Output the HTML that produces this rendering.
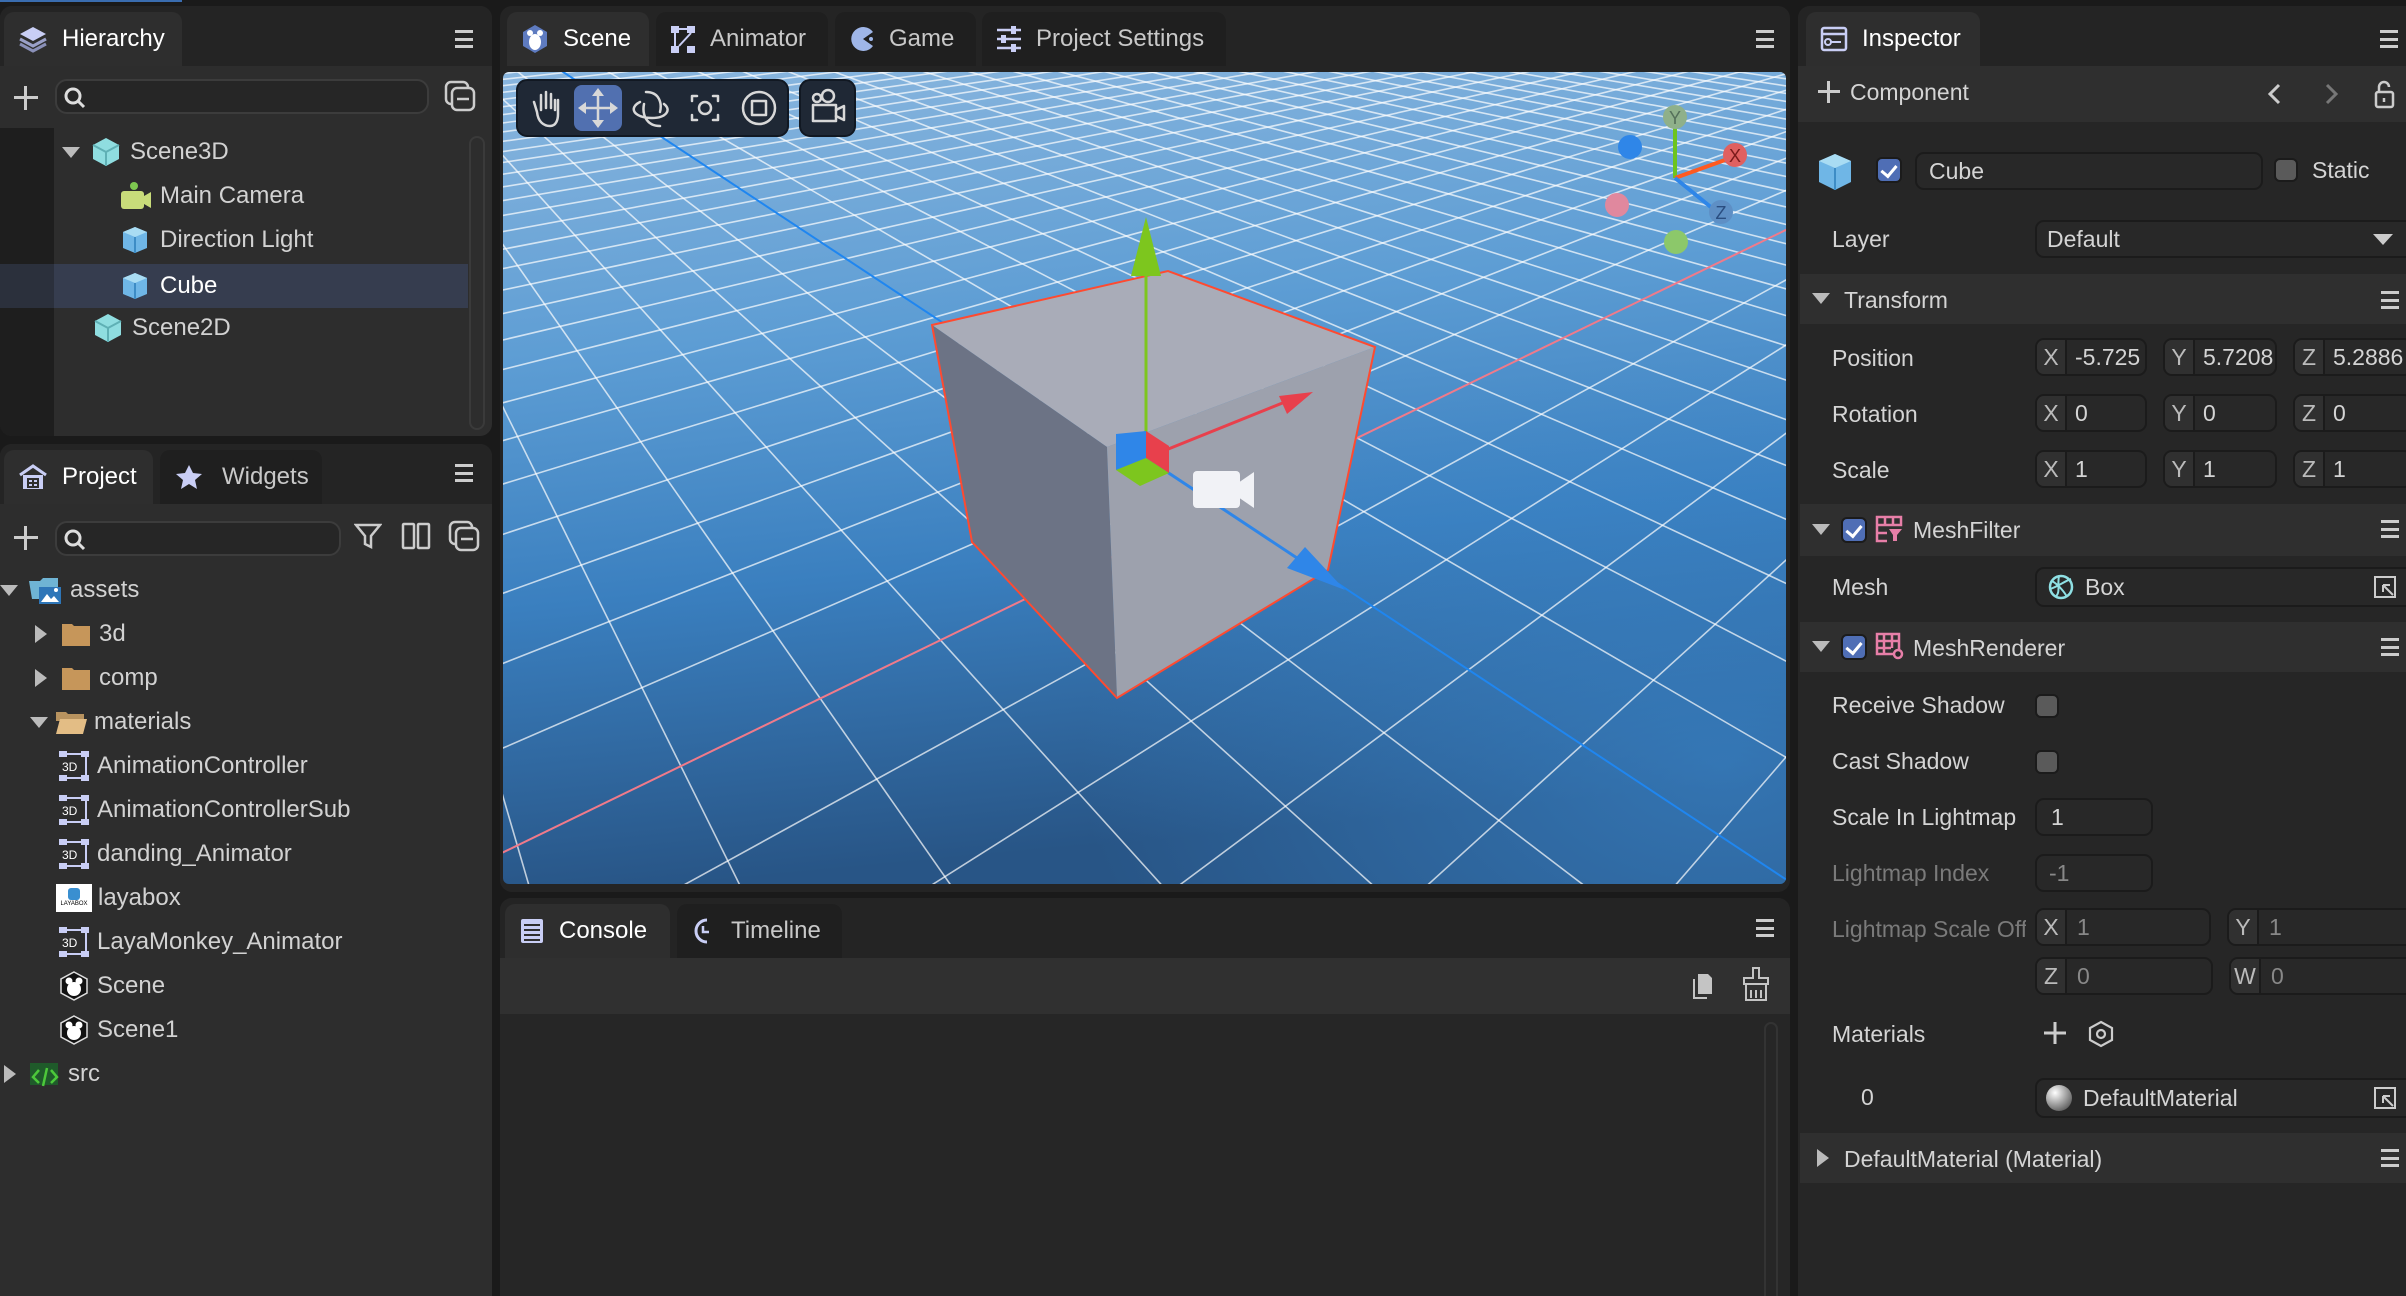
<!DOCTYPE html>
<html><head><meta charset="utf-8"><style>
*{box-sizing:border-box;margin:0;padding:0}
html,body{width:2406px;height:1296px;overflow:hidden}
body{background:#1a1a1a;font-family:"Liberation Sans",sans-serif;color:#d2d2d2;font-size:24px}
#root{position:relative;width:2406px;height:1296px;overflow:hidden}
.a{position:absolute}
.panel{position:absolute;background:#2d2d2d;border-radius:12px;overflow:hidden}
.tabbar{position:absolute;left:0;right:0;top:0;height:60px;background:#242424}
.tab{position:absolute;top:12px;height:54px;border-radius:10px 10px 0 0;background:#1f1f1f;display:flex;align-items:center;font-size:24px;color:#c8c8c8}
.tab.on{background:#2e2e2e;color:#fff}
.tab svg{margin:0 14px 0 14px}
.menu{position:absolute;width:18px;height:18px;border-top:3px solid #ccc;border-bottom:3px solid #ccc}
.menu:after{content:"";position:absolute;left:0;right:0;top:5px;border-top:3px solid #ccc}
.row{position:absolute;height:44px;display:flex;align-items:center;white-space:nowrap}
.tri{width:0;height:0;border-left:9px solid transparent;border-right:9px solid transparent;border-top:11px solid #bbb}
.trir{width:0;height:0;border-top:9px solid transparent;border-bottom:9px solid transparent;border-left:12px solid #bbb}
.search{position:absolute;border:2px solid #3c3c3c;background:#262626;border-radius:12px}
.lbl{position:absolute;font-size:23px;color:#d4d4d4;white-space:nowrap}
.fld{position:absolute;background:#282828;border:2px solid #1b1b1b;border-radius:9px;font-size:23px;color:#d4d4d4;display:flex;align-items:center;overflow:hidden;white-space:nowrap}
.fld .k{width:30px;height:100%;background:#303030;border-right:2px solid #1b1b1b;display:flex;align-items:center;justify-content:center;color:#bbb;flex:none}
.fld .v{padding-left:10px}
.hdr{position:absolute;background:#2f2f2f}
.cb{position:absolute;width:26px;height:26px;border-radius:6px;background:#4f6eb5;border:2px solid #1b1b1b}
.cb:after{content:"";position:absolute;left:6px;top:3px;width:7px;height:12px;border:solid #fff;border-width:0 3px 3px 0;transform:rotate(40deg)}
.ucb{position:absolute;width:24px;height:24px;border-radius:6px;background:#5a5a5a;border:2px solid #1b1b1b}
</style></head><body><div id="root">
<div class="a" style="left:0;top:0;width:182px;height:2px;background:#3a6db0"></div>

<!-- HIERARCHY -->
<div class="panel" style="left:0;top:6px;width:492px;height:430px;background:#2d2d2d">
 <div class="tabbar" style="height:60px"></div>
 <div class="tab on" style="left:4px;top:6px;width:178px"><svg width="30" height="30" viewBox="0 0 30 30"><path d="M15 3 L28 10 L15 17 L2 10Z" fill="#c9cef5"/><path d="M2 15 L15 22 L28 15" stroke="#9aa0c8" stroke-width="3" fill="none"/><path d="M2 20 L15 27 L28 20" stroke="#8a90b8" stroke-width="3" fill="none"/></svg>Hierarchy</div>
 <div class="menu" style="left:455px;top:24px"></div>
 <div class="a" style="left:14px;top:80px;width:24px;height:24px"><div class="a" style="left:10px;top:0;width:3px;height:24px;background:#ccc"></div><div class="a" style="left:0;top:10px;width:24px;height:3px;background:#ccc"></div></div>
 <div class="search" style="left:55px;top:73px;width:374px;height:35px"><svg class="a" style="left:6px;top:5px" width="24" height="24" viewBox="0 0 24 24"><circle cx="10" cy="10" r="7" stroke="#ddd" stroke-width="3" fill="none"/><path d="M15 15 L21 21" stroke="#ddd" stroke-width="3"/></svg></div>
 <svg class="a" style="left:444px;top:74px" width="32" height="32" viewBox="0 0 32 32"><rect x="2" y="2" width="22" height="22" rx="5" stroke="#ccc" stroke-width="2.5" fill="none"/><rect x="8" y="8" width="22" height="22" rx="5" stroke="#ccc" stroke-width="2.5" fill="#2d2d2d"/><path d="M13 19 H25" stroke="#ccc" stroke-width="2.5"/></svg>
 <div class="a" style="left:0;top:122px;width:54px;height:308px;background:#1e1e1e"></div>
 <div class="a" style="left:0;top:258px;width:54px;height:44px;background:#2b303c"></div>
 <div class="a" style="left:54px;top:258px;width:414px;height:44px;background:#363d4f"></div>
 <div class="a" style="left:469px;top:130px;width:16px;height:294px;border:2px solid #3a3a3a;border-radius:8px"></div>
 <div class="row" style="left:62px;top:124px"><div class="tri" style="margin-right:10px"></div><svg width="32" height="32" viewBox="0 0 32 32"><path d="M16 2 L29 9 V23 L16 30 L3 23 V9Z" fill="#8fdde0"/><path d="M3 9 L16 16 L29 9 M16 16 V30" stroke="#5fb0b5" stroke-width="2" fill="none"/></svg><span style="margin-left:8px">Scene3D</span></div>
 <div class="row" style="left:120px;top:168px"><svg width="32" height="30" viewBox="0 0 32 30"><rect x="1" y="10" width="23" height="18" rx="3" fill="#c8dc7a"/><path d="M24 15 L31 11 V27 L24 23Z" fill="#c8dc7a"/><circle cx="14" cy="5" r="4" fill="#7ec850"/></svg><span style="margin-left:8px">Main Camera</span></div>
 <div class="row" style="left:120px;top:212px"><svg width="30" height="30" viewBox="0 0 30 30"><path d="M15 2 L27 7 V23 L15 28 L3 23 V7Z" fill="#6fb6e6"/><path d="M3 7 L15 12 L27 7 L15 2Z" fill="#a9dcf3"/><path d="M15 12 V28" stroke="#3d8cc5" stroke-width="2"/></svg><span style="margin-left:10px">Direction Light</span></div>
 <div class="row" style="left:120px;top:258px;color:#fff"><svg width="30" height="30" viewBox="0 0 30 30"><path d="M15 2 L27 7 V23 L15 28 L3 23 V7Z" fill="#6fb6e6"/><path d="M3 7 L15 12 L27 7 L15 2Z" fill="#a9dcf3"/><path d="M15 12 V28" stroke="#3d8cc5" stroke-width="2"/></svg><span style="margin-left:10px">Cube</span></div>
 <div class="row" style="left:92px;top:300px"><svg width="32" height="32" viewBox="0 0 32 32"><path d="M16 2 L29 9 V23 L16 30 L3 23 V9Z" fill="#8fdde0"/><path d="M3 9 L16 16 L29 9 M16 16 V30" stroke="#5fb0b5" stroke-width="2" fill="none"/></svg><span style="margin-left:8px">Scene2D</span></div>
</div>

<!-- PROJECT -->
<div class="panel" style="left:0;top:444px;width:492px;height:852px;background:#2d2d2d;border-radius:12px 12px 0 0">
 <div class="tabbar" style="height:60px"></div>
 <div class="tab on" style="left:4px;top:6px;width:149px"><svg width="30" height="28" viewBox="0 0 30 28"><path d="M2 12 L15 3 L28 12" stroke="#c9cef5" stroke-width="3" fill="none"/><rect x="5" y="12" width="20" height="14" fill="#c9cef5"/><path d="M10 16h10v8h-10z M15 16v8 M10 20h10" stroke="#2e2e2e" stroke-width="2" fill="none"/></svg>Project</div>
 <div class="tab" style="left:160px;top:6px;width:162px"><svg width="30" height="28" viewBox="0 0 30 28"><path d="M15 2 L19 10 L28 11 L21 17 L23 26 L15 21 L7 26 L9 17 L2 11 L11 10Z" fill="#c9cef5"/></svg><span style="margin-left:4px">Widgets</span></div>
 <div class="menu" style="left:455px;top:20px"></div>
 <div class="a" style="left:14px;top:82px;width:24px;height:24px"><div class="a" style="left:10px;top:0;width:3px;height:24px;background:#ccc"></div><div class="a" style="left:0;top:10px;width:24px;height:3px;background:#ccc"></div></div>
 <div class="search" style="left:55px;top:77px;width:286px;height:35px"><svg class="a" style="left:6px;top:5px" width="24" height="24" viewBox="0 0 24 24"><circle cx="10" cy="10" r="7" stroke="#ddd" stroke-width="3" fill="none"/><path d="M15 15 L21 21" stroke="#ddd" stroke-width="3"/></svg></div>
 <svg class="a" style="left:354px;top:78px" width="28" height="28" viewBox="0 0 28 28"><path d="M2 3 H26 L17 14 V25 L11 22 V14Z" stroke="#ccc" stroke-width="2.5" fill="none"/></svg>
 <svg class="a" style="left:401px;top:78px" width="30" height="28" viewBox="0 0 30 28"><rect x="2" y="2" width="11" height="24" rx="1" stroke="#ccc" stroke-width="2.5" fill="none"/><rect x="17" y="2" width="11" height="24" rx="1" stroke="#ccc" stroke-width="2.5" fill="none"/></svg>
 <svg class="a" style="left:448px;top:76px" width="32" height="32" viewBox="0 0 32 32"><rect x="2" y="2" width="22" height="22" rx="5" stroke="#ccc" stroke-width="2.5" fill="none"/><rect x="8" y="8" width="22" height="22" rx="5" stroke="#ccc" stroke-width="2.5" fill="#2d2d2d"/><path d="M13 19 H25" stroke="#ccc" stroke-width="2.5"/></svg>
 <div class="row" style="left:0;top:124px"><div class="tri" style="margin-right:10px"></div><svg width="34" height="30" viewBox="0 0 34 30"><path d="M1 6 H12 L15 3 H30 V24 H4Z" fill="#6fb4d4"/><rect x="11" y="12" width="22" height="17" fill="#2e76b8"/><path d="M13 27 L19 19 L23 24 L26 21 L31 27Z" fill="#fff"/><circle cx="28" cy="15" r="2" fill="#fff"/></svg><span style="margin-left:8px">assets</span></div>
 <div class="row" style="left:35px;top:168px"><div class="trir" style="margin-right:14px"></div><svg width="30" height="26" viewBox="0 0 30 26"><path d="M1 3 H11 L13 5 H29 V25 H1Z" fill="#c6965a"/></svg><span style="margin-left:8px">3d</span></div>
 <div class="row" style="left:35px;top:212px"><div class="trir" style="margin-right:14px"></div><svg width="30" height="26" viewBox="0 0 30 26"><path d="M1 3 H11 L13 5 H29 V25 H1Z" fill="#c6965a"/></svg><span style="margin-left:8px">comp</span></div>
 <div class="row" style="left:30px;top:256px"><div class="tri" style="margin-right:7px"></div><svg width="33" height="26" viewBox="0 0 33 26"><path d="M1 3 H11 L13 5 H29 V12 H1Z" fill="#b8935f"/><path d="M5 10 H32 L28 25 H1Z" fill="#e3bd85"/></svg><span style="margin-left:6px">materials</span></div>
 <div id="anims"></div>
</div>

<!-- SCENE PANEL -->
<div class="panel" style="left:500px;top:6px;width:1290px;height:886px;background:#242424">
 <div class="tab on" style="left:7px;top:6px;width:142px"><svg width="28" height="30" viewBox="0 0 28 30"><path d="M14 1 L26 8 V22 L14 29 L2 22 V8Z" fill="#5e7bc0"/><ellipse cx="14" cy="18" rx="6" ry="8" fill="#fff"/><circle cx="9" cy="9" r="3" fill="#fff"/><circle cx="19" cy="9" r="3" fill="#fff"/></svg>Scene</div>
 <div class="tab" style="left:156px;top:6px;width:172px"><svg width="26" height="30" viewBox="0 0 26 30"><rect x="1" y="2" width="8" height="7" fill="#c9cef5"/><rect x="17" y="2" width="8" height="7" fill="#c9cef5"/><rect x="1" y="22" width="8" height="7" fill="#c9cef5"/><rect x="17" y="22" width="8" height="7" fill="#c9cef5"/><path d="M9 5 H17 M5 9 V22 M21 9 L9 22" stroke="#c9cef5" stroke-width="2"/></svg>Animator</div>
 <div class="tab" style="left:335px;top:6px;width:141px"><svg width="26" height="30" viewBox="0 0 26 30"><path d="M24 8 A12 12 0 1 0 24 22 L14 15Z" fill="#9fb6e8"/><circle cx="22" cy="15" r="2" fill="#9fb6e8"/></svg>Game</div>
 <div class="tab" style="left:482px;top:6px;width:244px"><svg width="26" height="28" viewBox="0 0 26 28"><path d="M1 5H25 M1 14H25 M1 23H25" stroke="#c9cef5" stroke-width="2.5"/><rect x="15" y="1" width="5" height="8" fill="#c9cef5"/><rect x="5" y="10" width="5" height="8" fill="#c9cef5"/><rect x="15" y="19" width="5" height="8" fill="#c9cef5"/></svg>Project Settings</div>
 <div class="menu" style="left:1256px;top:24px"></div>
</div>
<div class="a" style="left:503px;top:72px;width:1283px;height:812px;overflow:hidden;border-radius:6px">
<svg style="display:block" width="1283" height="812" viewBox="503 72 1283 812" overflow="hidden">
 <defs>
  <linearGradient id="bg" x1="0" y1="0" x2="0.15" y2="1"><stop offset="0" stop-color="#8ab6de"/><stop offset="0.35" stop-color="#5d9dd4"/><stop offset="0.65" stop-color="#3a7fbf"/><stop offset="1" stop-color="#285586"/></linearGradient>
  <radialGradient id="gl" cx="0.95" cy="0.85" r="0.5"><stop offset="0" stop-color="#3c8ad0" stop-opacity="0.6"/><stop offset="1" stop-color="#3c8ad0" stop-opacity="0"/></radialGradient>
 </defs>
 <rect x="503" y="72" width="1283" height="812" fill="url(#bg)"/>
 <rect x="503" y="72" width="1283" height="812" fill="url(#gl)"/>
 <g id="grid" stroke="#ffffff" fill="none"></g>
 <g id="axes" fill="none"></g>
 <polygon points="932,325 1168,271 1375,347 1107,447" fill="#a9acb8"/>
 <polygon points="932,325 1107,447 1117,698 972,542" fill="#6c7385"/>
 <polygon points="1107,447 1375,347 1328,570 1117,698" fill="#9da1ad"/>
 <polygon points="932,325 1168,271 1375,347 1328,570 1117,698 972,542" fill="none" stroke="#ff4a30" stroke-width="2"/>
 <line x1="1146" y1="458" x2="1146" y2="272" stroke="#7dc61e" stroke-width="3"/>
 <polygon points="1146,217 1131,276 1161,276" fill="#7dc61e"/>
 <line x1="1146" y1="458" x2="1285" y2="402" stroke="#e8404c" stroke-width="3"/>
 <polygon points="1313,392 1279,396 1287,414" fill="#e8404c"/>
 <line x1="1146" y1="458" x2="1300" y2="560" stroke="#2f86e8" stroke-width="3"/>
 <polygon points="1345,590 1287,568 1305,547" fill="#2f86e8"/>
 <polygon points="1116,434 1146,431 1146,464 1116,470" fill="#2f86e8"/>
 <polygon points="1146,431 1169,446 1169,473 1146,458" fill="#e8404c"/>
 <polygon points="1116,470 1146,458 1169,473 1140,486" fill="#7dc61e"/>
 <rect x="1193" y="471" width="47" height="37" rx="4" fill="#f1f2f6"/>
 <polygon points="1238,483 1254,472 1254,508 1238,497" fill="#f1f2f6"/>
 <line x1="1675" y1="178" x2="1675" y2="128" stroke="#6dc41e" stroke-width="4"/>
 <line x1="1675" y1="178" x2="1725" y2="160" stroke="#ff5a20" stroke-width="4"/>
 <line x1="1675" y1="178" x2="1712" y2="208" stroke="#2f86e8" stroke-width="4"/>
 <circle cx="1675" cy="117" r="12" fill="#8fb08a"/><text x="1675" y="124" font-size="18" text-anchor="middle" fill="#55705a" font-family="Liberation Sans">Y</text>
 <circle cx="1735" cy="155" r="12" fill="#e06060"/><text x="1735" y="162" font-size="18" text-anchor="middle" fill="#7a1a1a" font-family="Liberation Sans">X</text>
 <circle cx="1721" cy="212" r="12" fill="#5e8fc5"/><text x="1721" y="219" font-size="18" text-anchor="middle" fill="#2a4d80" font-family="Liberation Sans">Z</text>
 <circle cx="1630" cy="147" r="12" fill="#2f86e8"/>
 <circle cx="1617" cy="205" r="12" fill="#e0889e"/>
 <circle cx="1676" cy="242" r="12" fill="#8cc86a"/>
 <rect x="517" y="80" width="271" height="56" rx="10" fill="#1f2835" stroke="#111822" stroke-width="2"/>
 <rect x="800" y="80" width="55" height="56" rx="10" fill="#1f2835" stroke="#111822" stroke-width="2"/>
 <rect x="574" y="85" width="48" height="46" rx="8" fill="#5170b0"/>
 <g stroke="#d8d8d8" stroke-width="2.5" fill="none" stroke-linecap="round" stroke-linejoin="round">
  <path d="M537 112 L534 102 M537 112 C538 122 544 126 550 126 C556 126 558 120 558 114 L558 100 M541 110 V95 M546 108 V92 M551 108 V94 M555 110 V100"/>
  <path d="M598 92 V124 M582 108 H614"/>
  <path d="M646 92 C660 92 662 104 660 112 M660 126 C646 126 642 114 644 104 M640 102 C628 108 634 118 652 118 C666 118 672 110 664 104"/>
  <path d="M692 96 V101 M692 96 H697 M718 96 V101 M718 96 H713 M692 120 V115 M692 120 H697 M718 120 V115 M718 120 H713"/><circle cx="705" cy="108" r="6"/>
  <rect x="752" y="101" width="14" height="14"/><circle cx="759" cy="108" r="16"/>
  <circle cx="817" cy="98" r="4"/><circle cx="828" cy="96" r="6"/><rect x="813" y="105" width="23" height="16"/><path d="M836 110 L844 106 V120 L836 116"/>
 </g>
 <polygon points="598,88 592,96 604,96" fill="#d8d8d8"/><polygon points="598,128 592,120 604,120" fill="#d8d8d8"/>
 <polygon points="578,108 586,102 586,114" fill="#d8d8d8"/><polygon points="618,108 610,102 610,114" fill="#d8d8d8"/>
</svg>
</div>

<!-- CONSOLE -->
<div class="panel" style="left:500px;top:898px;width:1290px;height:398px;background:#262626;border-radius:12px 12px 0 0">
 <div class="tabbar" style="height:60px"></div>
 <div class="tab on" style="left:5px;top:6px;width:165px"><svg width="26" height="28" viewBox="0 0 26 28"><rect x="2" y="2" width="22" height="24" rx="2" fill="#c9cef5"/><path d="M5 8H21 M5 13H21 M5 18H21 M5 23H21" stroke="#2e2e2e" stroke-width="2"/></svg>Console</div>
 <div class="tab" style="left:177px;top:6px;width:165px"><svg width="26" height="28" viewBox="0 0 26 28"><path d="M16 3 A11 11 0 1 0 16 25" stroke="#c9cef5" stroke-width="3" fill="none"/><path d="M12 9 V15 H18" stroke="#c9cef5" stroke-width="2.5" fill="none"/></svg>Timeline</div>
 <div class="menu" style="left:1256px;top:21px"></div>
 <div class="a" style="left:0;top:60px;width:1290px;height:56px;background:#303030"></div>
 <svg class="a" style="left:1190px;top:72px" width="30" height="32" viewBox="0 0 30 32"><path d="M8 4 H18 L22 8 V24 H8Z" fill="#c4c4c4"/><path d="M4 9 V28 H17" stroke="#c4c4c4" stroke-width="2" fill="none"/></svg>
 <svg class="a" style="left:1240px;top:68px" width="32" height="36" viewBox="0 0 32 36"><path d="M13 2 H19 V12 H28 V18 H4 V12 H13Z" stroke="#c4c4c4" stroke-width="2" fill="none"/><path d="M6 18 V34 H26 V18 M11 24 V32 M16 24 V32 M21 24 V32" stroke="#c4c4c4" stroke-width="2" fill="none"/></svg>
 <div class="a" style="left:1264px;top:124px;width:14px;height:274px;border:2px solid #333;border-bottom:none;border-radius:7px 7px 0 0"></div>
</div>

<!-- INSPECTOR -->
<div class="panel" style="left:1798px;top:6px;width:608px;height:1290px;background:#262626;border-radius:12px 0 0 0">
 <div class="tabbar" style="height:60px"></div>
 <div class="tab on" style="left:8px;top:6px;width:174px"><svg width="28" height="26" viewBox="0 0 28 26"><rect x="2" y="2" width="24" height="22" rx="2" stroke="#c9cef5" stroke-width="2.5" fill="none"/><path d="M2 8H26" stroke="#c9cef5" stroke-width="2.5"/><circle cx="8" cy="16" r="3" stroke="#c9cef5" stroke-width="2" fill="none"/><path d="M11 16H21" stroke="#c9cef5" stroke-width="2"/></svg>Inspector</div>
 <div class="menu" style="left:582px;top:24px"></div>
 <div class="a" style="left:0;top:60px;width:608px;height:56px;background:#2f2f2f"></div>
</div>
<div class="a" style="left:1818px;top:81px;width:22px;height:22px"><div class="a" style="left:9px;top:0;width:3px;height:22px;background:#ccc"></div><div class="a" style="left:0;top:9px;width:22px;height:3px;background:#ccc"></div></div>
<div class="lbl" style="left:1850px;top:79px">Component</div>
<svg class="a" style="left:2265px;top:80px" width="130" height="30" viewBox="0 0 130 30"><path d="M14 5 L5 14 L14 23" stroke="#ccc" stroke-width="3" fill="none"/><path d="M62 5 L71 14 L62 23" stroke="#777" stroke-width="3" fill="none"/><rect x="111" y="12" width="17" height="15" rx="2" stroke="#ccc" stroke-width="2.5" fill="none"/><path d="M114 12 V7 A5 5 0 0 1 124 7" stroke="#ccc" stroke-width="2.5" fill="none"/><path d="M119 18 V22" stroke="#ccc" stroke-width="2.5"/></svg>
<svg class="a" style="left:1817px;top:152px" width="36" height="40" viewBox="0 0 36 40"><path d="M18 2 L34 9 V30 L18 38 L2 30 V9Z" fill="#6fb6e6"/><path d="M2 9 L18 16 L34 9 L18 2Z" fill="#a9dcf3"/><path d="M18 16 V38" stroke="#3d8cc5" stroke-width="2"/></svg>
<div class="cb" style="left:1876px;top:157px"></div>
<div class="fld" style="left:1915px;top:152px;width:348px;height:38px"><span class="v" style="padding-left:12px">Cube</span></div>
<div class="ucb" style="left:2274px;top:158px"></div>
<div class="lbl" style="left:2312px;top:157px">Static</div>
<div class="lbl" style="left:1832px;top:226px">Layer</div>
<div class="fld" style="left:2035px;top:220px;width:380px;height:38px"><span class="v">Default</span><div class="a" style="left:336px;top:12px;width:0;height:0;border-left:10px solid transparent;border-right:10px solid transparent;border-top:11px solid #ccc"></div></div>
<div class="hdr" style="left:1800px;width:606px;top:274px;height:50px"></div>
<div class="tri a" style="left:1812px;top:293px"></div>
<div class="lbl" style="left:1844px;top:287px">Transform</div>
<div class="menu" style="left:2381px;top:291px"></div>
<div id="tr"></div>
<div class="hdr" style="left:1800px;width:606px;top:504px;height:52px"></div>
<div class="tri a" style="left:1812px;top:524px"></div>
<div class="cb" style="left:1841px;top:517px"></div>
<svg class="a" style="left:1875px;top:515px" width="28" height="28" viewBox="0 0 28 28"><path d="M2 2H26V10H2Z M2 10V26H12 M2 18H12 M10 2V10 M18 2V10" stroke="#e77fa8" stroke-width="2.5" fill="none"/><path d="M14 14H27L22 20V26H18V20Z" fill="#e77fa8"/></svg>
<div class="lbl" style="left:1913px;top:517px">MeshFilter</div>
<div class="menu" style="left:2381px;top:520px"></div>
<div class="lbl" style="left:1832px;top:574px">Mesh</div>
<div class="fld" style="left:2035px;top:567px;width:380px;height:40px"><svg style="margin-left:10px" width="28" height="28" viewBox="0 0 28 28"><circle cx="14" cy="14" r="11" stroke="#8fe0e4" stroke-width="2.5" fill="none"/><path d="M5 8 C12 12 18 20 20 24 M3 16 C10 14 18 8 24 6 M12 3 C10 12 14 20 8 24" stroke="#8fe0e4" stroke-width="2" fill="none"/></svg><span class="v">Box</span><svg class="a" style="left:336px;top:6px" width="24" height="24" viewBox="0 0 24 24"><path d="M2 2H22V22H2Z" stroke="#ccc" stroke-width="2" fill="none"/><path d="M10 10 L20 20 M10 10V17 M10 10H17" stroke="#ccc" stroke-width="2"/></svg></div>
<div class="hdr" style="left:1800px;width:606px;top:622px;height:50px"></div>
<div class="tri a" style="left:1812px;top:641px"></div>
<div class="cb" style="left:1841px;top:634px"></div>
<svg class="a" style="left:1875px;top:632px" width="30" height="28" viewBox="0 0 30 28"><path d="M2 2H24V22H2Z M2 9H24 M2 16H16 M9 2V22 M17 2V16" stroke="#e77fa8" stroke-width="2.5" fill="none"/><circle cx="23" cy="22" r="4" stroke="#e77fa8" stroke-width="2.5" fill="#262626"/></svg>
<div class="lbl" style="left:1913px;top:635px">MeshRenderer</div>
<div class="menu" style="left:2381px;top:638px"></div>
<div class="lbl" style="left:1832px;top:692px">Receive Shadow</div><div class="ucb" style="left:2035px;top:694px"></div>
<div class="lbl" style="left:1832px;top:748px">Cast Shadow</div><div class="ucb" style="left:2035px;top:750px"></div>
<div class="lbl" style="left:1832px;top:804px">Scale In Lightmap</div>
<div class="fld" style="left:2035px;top:798px;width:118px;height:38px"><span class="v" style="padding-left:14px">1</span></div>
<div class="lbl" style="left:1832px;top:860px;color:#7a7a7a">Lightmap Index</div>
<div class="fld" style="left:2035px;top:854px;width:118px;height:38px;color:#888"><span class="v" style="padding-left:12px">-1</span></div>
<div class="lbl" style="left:1832px;top:916px;color:#7a7a7a;width:194px;overflow:hidden">Lightmap Scale Offset</div>
<div class="fld" style="left:2035px;top:908px;width:176px;height:38px;color:#888"><div class="k">X</div><span class="v">1</span></div>
<div class="fld" style="left:2227px;top:908px;width:190px;height:38px;color:#888"><div class="k">Y</div><span class="v">1</span></div>
<div class="fld" style="left:2035px;top:957px;width:178px;height:38px;color:#888"><div class="k">Z</div><span class="v">0</span></div>
<div class="fld" style="left:2229px;top:957px;width:190px;height:38px;color:#888"><div class="k">W</div><span class="v">0</span></div>
<div class="lbl" style="left:1832px;top:1021px">Materials</div>
<svg class="a" style="left:2042px;top:1020px" width="90" height="28" viewBox="0 0 90 28"><path d="M13 2V24 M2 13H24" stroke="#ccc" stroke-width="3"/><path d="M59 2 L70 8 V20 L59 26 L48 20 V8Z" stroke="#ccc" stroke-width="2.2" fill="none"/><circle cx="59" cy="14" r="4" stroke="#ccc" stroke-width="2.2" fill="none"/></svg>
<div class="lbl" style="left:1861px;top:1084px">0</div>
<div class="fld" style="left:2035px;top:1078px;width:380px;height:40px"><svg style="margin-left:8px" width="28" height="28" viewBox="0 0 28 28"><defs><radialGradient id="sp" cx="0.35" cy="0.3" r="0.8"><stop offset="0" stop-color="#fff"/><stop offset="1" stop-color="#555"/></radialGradient></defs><circle cx="14" cy="14" r="13" fill="url(#sp)"/></svg><span class="v">DefaultMaterial</span><svg class="a" style="left:336px;top:6px" width="24" height="24" viewBox="0 0 24 24"><path d="M2 2H22V22H2Z" stroke="#ccc" stroke-width="2" fill="none"/><path d="M10 10 L20 20 M10 10V17 M10 10H17" stroke="#ccc" stroke-width="2"/></svg></div>
<div class="hdr" style="left:1800px;width:606px;top:1133px;height:50px"></div>
<div class="trir a" style="left:1817px;top:1149px"></div>
<div class="lbl" style="left:1844px;top:1146px">DefaultMaterial (Material)</div>
<div class="menu" style="left:2381px;top:1149px"></div>
</div>
<script>
(function(){
 var names=["AnimationController","AnimationControllerSub","danding_Animator","layabox","LayaMonkey_Animator","Scene","Scene1"];
 var ico3d='<svg width="30" height="30" viewBox="0 0 30 30"><rect x="0" y="0" width="8" height="6" fill="#c9cef5"/><rect x="22" y="0" width="8" height="6" fill="#c9cef5"/><rect x="0" y="24" width="8" height="6" fill="#c9cef5"/><rect x="22" y="24" width="8" height="6" fill="#c9cef5"/><path d="M8 3H22 M8 27H22 M27 6V24" stroke="#c9cef5" stroke-width="2"/><text x="3" y="20" font-size="12" fill="#fff" font-family="Liberation Sans">3D</text></svg>';
 var icoLaya='<div style="width:36px;height:28px;background:#fff;display:flex;flex-direction:column;align-items:center;justify-content:center"><div style="width:12px;height:12px;border-radius:3px;background:#3a8fd0"></div><div style="font-size:6px;color:#000;line-height:8px">LAYABOX</div></div>';
 var icoScene='<svg width="30" height="30" viewBox="0 0 30 30"><path d="M15 1 L28 8 V22 L15 29 L2 22 V8Z" fill="#111" stroke="#ddd" stroke-width="1.5"/><ellipse cx="15" cy="18" rx="7" ry="7" fill="#fff"/><circle cx="10" cy="10" r="3.5" fill="#fff"/><circle cx="20" cy="10" r="3.5" fill="#fff"/></svg>';
 var h='';
 for(var i=0;i<names.length;i++){
  var ic=names[i]=="layabox"?icoLaya:(names[i].indexOf("Scene")==0?icoScene:ico3d);
  var lft=names[i]=="layabox"?56:59;
  h+='<div class="row" style="left:'+lft+'px;top:'+(300+i*44)+'px">'+ic+'<span style="margin-left:'+(names[i]=="layabox"?6:8)+'px">'+names[i]+'</span></div>';
 }
 h+='<div class="row" style="left:4px;top:608px"><div class="trir" style="margin-right:14px"></div><svg width="30" height="28" viewBox="0 0 30 28"><rect x="0" y="3" width="28" height="22" fill="#1f5a2a"/><path d="M9 10 L3 17 L9 23 M21 10 L27 17 L21 23 M17 8 L13 26" stroke="#4cc83a" stroke-width="2.5" fill="none"/></svg><span style="margin-left:8px">src</span></div>';
 document.getElementById("anims").innerHTML=h;
 var rows=[["Position",["-5.725","5.7208","5.2886"],338],["Rotation",["0","0","0"],394],["Scale",["1","1","1"],450]];
 var xs=[2035,2163,2293],ws=[112,114,120],ks=["X","Y","Z"],t='';
 rows.forEach(function(r){
  t+='<div class="lbl" style="left:1832px;top:'+(r[2]+7)+'px">'+r[0]+'</div>';
  for(var j=0;j<3;j++)t+='<div class="fld" style="left:'+xs[j]+'px;top:'+r[2]+'px;width:'+ws[j]+'px;height:38px"><div class="k">'+ks[j]+'</div><span class="v" style="padding-left:8px">'+r[1][j]+'</span></div>';
 });
 document.getElementById("tr").innerHTML=t;
 var O=[1219,505],VX=[2569,-150],VZ=[227,-150],wx=0.057,wz=0.067;
 function P(u,v){var d=1+u*wx+v*wz;return[(O[0]+u*wx*VX[0]+v*wz*VZ[0])/d,(O[1]+u*wx*VX[1]+v*wz*VZ[1])/d];}
 var g='',a='';
 for(var k=-200;k<=200;k++){
  var vmin=(0.015-1-k*wx)/wz, p1=P(k,vmin), p2=P(k,vmin+20000);
  var l='<line x1="'+p1[0].toFixed(1)+'" y1="'+p1[1].toFixed(1)+'" x2="'+p2[0].toFixed(1)+'" y2="'+p2[1].toFixed(1)+'"';
  if(k==0)a+=l+' stroke="#1f86f0" stroke-width="2"/>';else g+=l+' stroke-opacity="0.7" stroke-width="1.6"/>';
  var umin=(0.015-1-k*wz)/wx, q1=P(umin,k), q2=P(umin+20000,k);
  var m='<line x1="'+q1[0].toFixed(1)+'" y1="'+q1[1].toFixed(1)+'" x2="'+q2[0].toFixed(1)+'" y2="'+q2[1].toFixed(1)+'"';
  if(k==0)a+=m+' stroke="#f07a8a" stroke-width="2"/>';else g+=m+' stroke-opacity="0.7" stroke-width="1.6"/>';
 }
 document.getElementById("grid").innerHTML=g;
 document.getElementById("axes").innerHTML=a;
})();
</script>
</body></html>
